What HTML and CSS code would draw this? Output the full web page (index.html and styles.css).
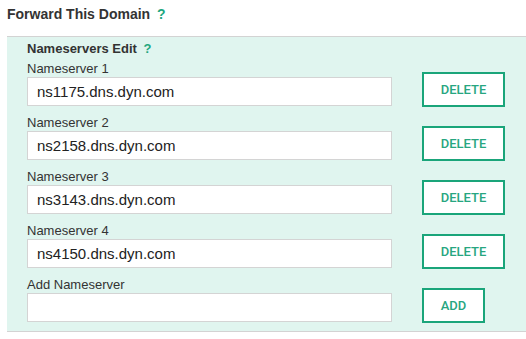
FILE: index.html
```html
<!DOCTYPE html>
<html lang="en">
<head>
    <meta charset="UTF-8">
    <title>Forward This Domain</title>
    <link rel="stylesheet" href="styles.css">
</head>
<body>
    <div class="page">
        <h2 class="title">Forward This Domain <span class="help">?</span></h2>
        <div class="panel">
            <h3 class="panel-title">Nameservers Edit <span class="help">?</span></h3>

            <div class="row">
                <div class="field">
                    <label>Nameserver 1</label>
                    <input type="text" value="ns1175.dns.dyn.com">
                </div>
                <button class="btn">DELETE</button>
            </div>

            <div class="row">
                <div class="field">
                    <label>Nameserver 2</label>
                    <input type="text" value="ns2158.dns.dyn.com">
                </div>
                <button class="btn">DELETE</button>
            </div>

            <div class="row">
                <div class="field">
                    <label>Nameserver 3</label>
                    <input type="text" value="ns3143.dns.dyn.com">
                </div>
                <button class="btn">DELETE</button>
            </div>

            <div class="row">
                <div class="field">
                    <label>Nameserver 4</label>
                    <input type="text" value="ns4150.dns.dyn.com">
                </div>
                <button class="btn">DELETE</button>
            </div>

            <div class="row">
                <div class="field">
                    <label>Add Nameserver</label>
                    <input type="text" value="">
                </div>
                <button class="btn btn-add">ADD</button>
            </div>
        </div>
    </div>
</body>
</html>
```

FILE: styles.css
```css
body {
    margin: 0;
    background-color: #fff;
    font-family: 'Liberation Sans', Arial, sans-serif;
    color: #333;
}
.page {
    padding: 4px 0 0 7px;
}
.title {
    margin: 0 0 12px;
    font-size: 14px;
    line-height: 20px;
    font-weight: bold;
    color: #333;
}
.help {
    margin-left: 3px;
    color: #1fa77f;
    font-weight: bold;
}
.panel {
    background-color: #e0f5ef;
    border-top: 1px solid #d3d3d3;
    border-bottom: 1px solid #d3d3d3;
    padding: 4px 0 9px 20px;
}
.panel-title {
    margin: 0 0 4px;
    font-size: 13px;
    line-height: 16px;
    font-weight: bold;
    color: #333;
}
.row {
    display: flex;
    align-items: flex-end;
    gap: 30px;
    margin-bottom: 9px;
}
.row:last-child {
    margin-bottom: 0;
}
.field {
    width: 365px;
}
.field label {
    display: block;
    font-size: 13px;
    line-height: 16px;
    color: #333;
}
.field input {
    display: block;
    box-sizing: border-box;
    width: 100%;
    height: 29px;
    margin: 0;
    padding: 0 9px;
    border: 1px solid #d4d4d4;
    background-color: #fff;
    font-family: 'Liberation Sans', Arial, sans-serif;
    font-size: 15px;
    color: #222;
    outline: none;
}
.btn {
    box-sizing: border-box;
    width: 83px;
    height: 35px;
    margin-bottom: -1px;
    padding: 0;
    border: 2px solid #1aa57a;
    background-color: #fff;
    font-family: Roboto, 'Liberation Sans', sans-serif;
    font-size: 13px;
    font-weight: 500;
    color: #27a680;
    cursor: pointer;
}
.btn-add {
    width: 63px;
}
```
